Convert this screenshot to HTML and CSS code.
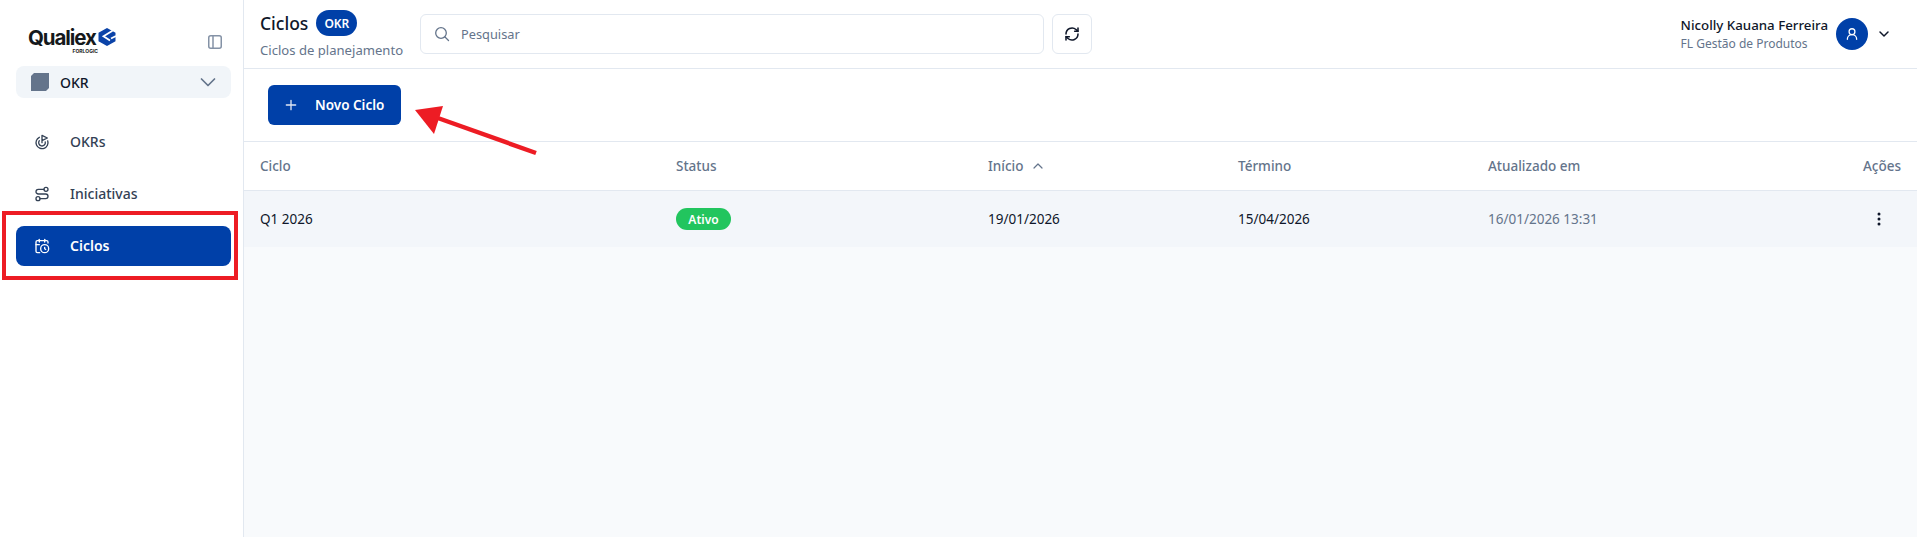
FILE: index.html
```html
<!DOCTYPE html>
<html lang="pt-BR">
<head>
<meta charset="utf-8">
<title>Ciclos</title>
<link rel="stylesheet" href="styles.css">
</head>
<body>
<div class="app">
  <aside class="sidebar">
    <div class="brand">
      <div class="logo">
        <div class="logo-row">
          <span class="logo-word">Qualiex</span>
          <svg class="logo-mark" width="18" height="18" viewBox="0 0 18 18"><path d="M9 0 17.500 4.700V13.300L9 18 .5 13.300V4.700z" fill="#0b43a8"/><path d="M14.500 2.800 5.500 8.300 12 12.500M18 8 13 10.500" stroke="#fff" stroke-width="1.800" fill="none"/></svg>
        </div>
        <span class="logo-sub">FORLOGIC</span>
      </div>
      <svg class="collapse" width="16" height="16" viewBox="0 0 16 16" fill="none" stroke="#8492a6" stroke-width="1.500"><rect x="1.750" y="1.750" width="12.500" height="12.500" rx="2"/><path d="M6 2v12"/></svg>
    </div>
    <div class="module">
      <span class="module-icon"></span>
      <span class="module-name">OKR</span>
      <svg class="module-caret" width="16" height="16" viewBox="0 0 16 16" fill="none" stroke="#64748b" stroke-width="1.700" stroke-linecap="round" stroke-linejoin="round"><path d="M1.500 5l6.500 6.500L14.500 5"/></svg>
    </div>
    <nav class="nav">
      <a class="nav-item">
        <svg width="16" height="16" viewBox="0 0 24 24" fill="none" stroke="#334155" stroke-width="2" stroke-linecap="round" stroke-linejoin="round"><path d="M12 13V2l8 4-8 4"/><path d="M20.561 10.222a9 9 0 1 1-12.55-5.290"/><path d="M8.002 9.997a5 5 0 1 0 8.900 2.020"/></svg>
        <span>OKRs</span>
      </a>
      <a class="nav-item">
        <svg width="16" height="16" viewBox="0 0 24 24" fill="none" stroke="#334155" stroke-width="2" stroke-linecap="round" stroke-linejoin="round"><circle cx="6" cy="19" r="3"/><path d="M9 19h8.500a3.500 3.500 0 0 0 0-7h-11a3.500 3.500 0 0 1 0-7H15"/><circle cx="18" cy="5" r="3"/></svg>
        <span>Iniciativas</span>
      </a>
      <a class="nav-item active">
        <svg width="16" height="16" viewBox="0 0 24 24" fill="none" stroke="#fff" stroke-width="2" stroke-linecap="round" stroke-linejoin="round"><path d="M16 14v2.200l1.600 1"/><path d="M16 2v4"/><path d="M21 7.500V6a2 2 0 0 0-2-2H5a2 2 0 0 0-2 2v14a2 2 0 0 0 2 2h3.500"/><path d="M3 10h5"/><path d="M8 2v4"/><circle cx="16" cy="16" r="6"/></svg>
        <span>Ciclos</span>
      </a>
    </nav>
  </aside>
  <main class="main">
    <header class="topbar">
      <div class="page-title">
        <div class="title-row">
          <h1>Ciclos</h1>
          <span class="badge">OKR</span>
        </div>
        <p>Ciclos de planejamento</p>
      </div>
      <div class="search">
        <svg width="16" height="16" viewBox="0 0 16 16" fill="none" stroke="#64748b" stroke-width="1.300" stroke-linecap="round"><circle cx="7" cy="7" r="5.300"/><path d="M11 11l3.500 3.500"/></svg>
        <span>Pesquisar</span>
      </div>
      <button class="refresh" type="button">
        <svg width="16" height="16" viewBox="0 0 24 24" fill="none" stroke="#0f172a" stroke-width="2.300" stroke-linecap="round" stroke-linejoin="round"><path d="M3 12a9 9 0 0 1 15-6.700L21 8"/><path d="M21 3v5h-5"/><path d="M21 12a9 9 0 0 1-15 6.700L3 16"/><path d="M8 16H3v5"/></svg>
      </button>
      <div class="user">
        <div class="user-text">
          <strong>Nicolly Kauana Ferreira</strong>
          <span>FL Gestão de Produtos</span>
        </div>
        <span class="avatar">
          <svg width="14" height="14" viewBox="0 0 24 24" fill="none" stroke="#fff" stroke-width="2.200" stroke-linecap="round" stroke-linejoin="round"><circle cx="12" cy="8" r="5"/><path d="M20 21a8 8 0 0 0-16 0"/></svg>
        </span>
        <svg width="12" height="12" viewBox="0 0 12 12" fill="none" stroke="#0f172a" stroke-width="1.500" stroke-linecap="round" stroke-linejoin="round"><path d="M2 4l4 4 4-4"/></svg>
      </div>
    </header>
    <div class="toolbar">
      <button class="primary" type="button">
        <svg width="16" height="16" viewBox="0 0 24 24" fill="none" stroke="#dfe6f3" stroke-width="2" stroke-linecap="round"><path d="M12 5v14M5 12h14"/></svg>
        <span>Novo Ciclo</span>
      </button>
    </div>
    <div class="table">
      <div class="thead">
        <span>Ciclo</span>
        <span>Status</span>
        <span class="sort">Início
          <svg width="12" height="12" viewBox="0 0 12 12" fill="none" stroke="#64748b" stroke-width="1.200" stroke-linecap="round" stroke-linejoin="round"><path d="M2 8l4-4 4 4"/></svg>
        </span>
        <span>Término</span>
        <span>Atualizado em</span>
        <span class="right">Ações</span>
      </div>
      <div class="trow">
        <span>Q1 2026</span>
        <span><i class="pill">Ativo</i></span>
        <span>19/01/2026</span>
        <span>15/04/2026</span>
        <span class="muted">16/01/2026 13:31</span>
        <span class="actions">
          <svg width="4" height="14" viewBox="0 0 4 14" fill="#0f172a"><circle cx="2" cy="2" r="1.500"/><circle cx="2" cy="7" r="1.500"/><circle cx="2" cy="12" r="1.500"/></svg>
        </span>
      </div>
    </div>
  </main>
</div>
<div class="callout-box"></div>
<svg class="callout-arrow" width="150" height="60" viewBox="0 0 150 60"><path d="M131 49 30 13" stroke="#ed1c24" stroke-width="4.500" fill="none"/><path d="M10 6 38 2 29 30z" fill="#ed1c24"/></svg>
</body>
</html>
```

FILE: styles.css
```css
* { box-sizing: border-box; }
html, body { margin: 0; height: 100%; }
body {
  font-family: "Noto Sans", "Open Sans", sans-serif;
  color: #0f172a;
  background: #fff;
  overflow: hidden;
  position: relative;
}
.app { display: flex; height: 537px; }

.sidebar {
  width: 244px;
  flex: none;
  border-right: 1px solid #e2e8f0;
  padding: 0 12px 0 16px;
  background: #fff;
}
.brand {
  display: flex;
  align-items: flex-start;
  justify-content: space-between;
  height: 66px;
  padding: 28px 8px 0 12px;
}
.logo { display: flex; flex-direction: column; width: 91px; }
.logo-row { display: flex; align-items: center; gap: 2px; height: 20px; }
.logo-word {
  font-family: "Inter", "Liberation Sans", sans-serif;
  font-size: 20.500px;
  font-weight: 700;
  letter-spacing: -1.100px;
  line-height: 20px;
  color: #15191c;
}
.logo-mark { flex: none; margin-top: -3px; }
.logo-sub {
  font-family: "Inter", "Liberation Sans", sans-serif;
  font-size: 5px;
  font-weight: 700;
  line-height: 6px;
  color: #222;
  align-self: flex-end;
  margin-right: 21px;
}
.collapse { margin-top: 6px; }
.module {
  display: flex;
  align-items: center;
  height: 32px;
  padding: 0 15px;
  border-radius: 8px;
  background: #f1f5f9;
}
.module-icon {
  width: 18px;
  height: 18px;
  background: #64748b;
  clip-path: polygon(3px 0, 100% 0, 100% calc(100% - 3px), calc(100% - 3px) 100%, 0 100%, 0 3px);
}
.module-name { margin-left: 11px; font-size: 14px; font-weight: 500; color: #0f172a; }
.module-caret { margin-left: auto; }

.nav { display: flex; flex-direction: column; gap: 12px; margin-top: 24px; }
.nav-item {
  display: flex;
  align-items: center;
  gap: 20px;
  height: 40px;
  padding: 0 18px 1px;
  border-radius: 8px;
  font-size: 14px;
  font-weight: 500;
  color: #334155;
}
.nav-item svg { flex: none; }
.nav-item.active { background: #0040a8; color: #fff; font-weight: 600; }

.main { flex: 1; display: flex; flex-direction: column; min-width: 0; background: #f8fafc; }
.topbar {
  display: flex;
  align-items: center;
  height: 69px;
  flex: none;
  padding: 0 16px;
  background: #fff;
  border-bottom: 1px solid #e2e8f0;
}
.page-title { width: 160px; flex: none; padding-top: 1px; }
.title-row { display: flex; align-items: center; gap: 8px; height: 26px; }
h1 { margin: 0; font-size: 17.500px; font-weight: 500; line-height: 26px; color: #0f172a; }
.badge {
  display: inline-flex;
  align-items: center;
  justify-content: center;
  width: 41px;
  height: 26px;
  border-radius: 13px;
  background: #0040a8;
  color: #fff;
  font-size: 12px;
  font-weight: 600;
}
.page-title p { margin: 5px 0 0; font-size: 13.100px; line-height: 18px; color: #64748b; }
.search {
  display: flex;
  align-items: center;
  gap: 11px;
  width: 624px;
  height: 40px;
  padding: 0 13px;
  border: 1px solid #e2e8f0;
  border-radius: 6px;
  font-size: 12.800px;
  color: #64748b;
  background: #fff;
}
.refresh {
  display: flex;
  align-items: center;
  justify-content: center;
  width: 40px;
  height: 40px;
  margin-left: 8px;
  padding: 0;
  border: 1px solid #e2e8f0;
  border-radius: 6px;
  background: #fff;
}
.user { display: flex; align-items: center; margin-left: auto; padding-right: 11px; }
.user-text { display: flex; flex-direction: column; padding-top: 1px; }
.user-text strong { font-size: 13.300px; line-height: 18px; font-weight: 500; color: #0f172a; }
.user-text span { font-size: 12px; line-height: 18px; color: #64748b; margin-top: 1px; }
.avatar {
  display: flex;
  align-items: center;
  justify-content: center;
  width: 32px;
  height: 32px;
  margin: 0 10px 0 8px;
  border-radius: 50%;
  background: #0040a8;
}

.toolbar {
  height: 73px;
  flex: none;
  padding: 16px 24px;
  background: #fff;
  border-bottom: 1px solid #e2e8f0;
}
.primary {
  display: flex;
  align-items: center;
  gap: 16px;
  height: 40px;
  width: 133px;
  padding: 0 15px;
  border: 0;
  border-radius: 6px;
  background: #0040a8;
  color: #fff;
  font-family: inherit;
  font-size: 13.500px;
  font-weight: 600;
  white-space: nowrap;
}

.thead, .trow {
  display: grid;
  grid-template-columns: 416px 312px 250px 250px 1fr 100px;
  align-items: center;
  padding: 0 16px;
  font-size: 14px;
}
.thead {
  height: 49px;
  background: #fff;
  border-bottom: 1px solid #e2e8f0;
  color: #64748b;
  font-size: 13.500px;
  font-weight: 500;
}
.sort { display: flex; align-items: center; gap: 9px; }
.right { text-align: right; }
.trow { height: 56px; background: #f3f6fa; color: #0f172a; font-size: 13.500px; }
.pill {
  display: inline-flex;
  align-items: center;
  justify-content: center;
  width: 55px;
  height: 22px;
  border-radius: 11px;
  background: #22c55e;
  color: #fff;
  font-style: normal;
  font-size: 12px;
  font-weight: 600;
}
.trow .muted { color: #64748b; }
.actions { display: flex; justify-content: flex-end; padding-right: 20px; }

.callout-box {
  position: absolute;
  left: 2px;
  top: 211px;
  width: 236px;
  height: 69px;
  border: 4px solid #ed1c24;
}
.callout-arrow { position: absolute; left: 405px; top: 104px; }
```
